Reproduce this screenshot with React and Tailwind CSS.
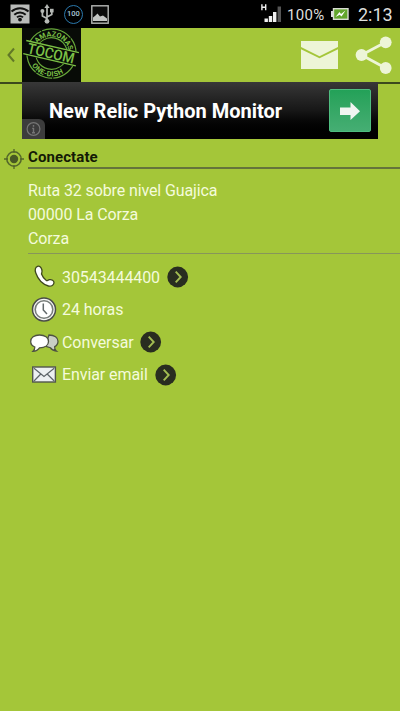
import React from "react";

function WifiBadge() {
  return (
    <svg width="20" height="20" viewBox="0 0 20 20" className="shrink-0">
      <rect x="0.5" y="0.5" width="19" height="19" fill="#b9bbb9" />
      <g fill="none" stroke="#111" strokeWidth="2">
        <path d="M1.5 7.6C6.4 3 13.6 3 18.5 7.6" />
        <path d="M4.3 10.7C7.5 7.7 12.5 7.7 15.7 10.7" />
        <path d="M7 13.4C8.7 11.7 11.3 11.7 13 13.4" />
      </g>
      <circle cx="10" cy="15.6" r="1.9" fill="#111" />
    </svg>
  );
}

function UsbIcon() {
  return (
    <svg width="14" height="20" viewBox="0 0 14 20" className="shrink-0" fill="#b5b8b5" stroke="#b5b8b5">
      <path d="M7 3V17M7 14.5L2.4 12V7M7 13L11.8 10.5V6" fill="none" strokeWidth="1.7" />
      <path d="M7 0L9.6 4H4.4Z" stroke="none" />
      <circle cx="2.4" cy="7" r="2" stroke="none" />
      <rect x="10" y="4.8" width="3.6" height="3.6" stroke="none" />
      <circle cx="7" cy="17.3" r="2.4" stroke="none" />
    </svg>
  );
}

function PictureIcon() {
  return (
    <svg width="18" height="19" viewBox="0 0 18 19" className="shrink-0">
      <rect x="0.8" y="0.8" width="16.4" height="17.4" fill="#0b0b0b" stroke="#b4b6b4" strokeWidth="1.4" />
      <path d="M2 16V12.5L4.5 10.5L6.5 8.5L9 11.5L12 10.5L16 13.5V16Z" fill="#c3c5c3" />
    </svg>
  );
}

function StatusBar() {
  return (
    <div className="flex h-7 items-center bg-black pl-[10px] pr-[7px] text-[#dededc]">
      <WifiBadge />
      <div className="ml-[10px] flex"><UsbIcon /></div>
      <div className="ml-[10px] flex size-[19px] shrink-0 items-center justify-center rounded-full border-[1.5px] border-[#2b79ad] text-[7.5px] font-medium text-[#a9c6d6]">
        100
      </div>
      <div className="ml-[8px] flex"><PictureIcon /></div>
      <svg width="22" height="20" viewBox="0 0 22 20" className="ml-auto shrink-0">
        <path d="M1.9 0.2V6.2M5.700 0.2V6.2M1.9 3.200H5.700" stroke="#eee" strokeWidth="1.4" fill="none" />
        <g fill="#f0f0f0">
          <rect x="4.500" y="14.500" width="3.400" height="3.500" />
          <rect x="8.800" y="12" width="3.400" height="6" />
          <rect x="13" y="8" width="3.400" height="10" />
        </g>
        <rect x="17.600" y="2.500" width="3.400" height="15.500" fill="#555" />
      </svg>
      <div className="ml-[5px] w-[38px] whitespace-nowrap pt-[2px] text-[15px] leading-5 tracking-[0.35px]">100%</div>
      <svg width="18" height="12" viewBox="0 0 18 12" className="ml-[6px] shrink-0">
        <rect x="0" y="3" width="3" height="6" fill="#ddd" />
        <rect x="2.5" y="0.7" width="14.5" height="10.6" fill="#62a52b" stroke="#d8dcd2" strokeWidth="1.4" />
        <path d="M4.500 9L8.500 4L10 6L14.500 2.500L10.500 8.500L8.700 6.800Z" fill="#fff" />
      </svg>
      <div className="ml-[9px] w-[35px] whitespace-nowrap pt-[2px] text-[18px] leading-5">2:13</div>
    </div>
  );
}

function Logo() {
  return (
    <svg width="59" height="54" viewBox="0 0 59 54" className="shrink-0 bg-[#080b07]">
      <defs>
        <path id="logoTop" d="M12 26A17.5 17.5 0 0 1 47 26" />
        <path id="logoBottom" d="M7 26A22.5 22.5 0 0 0 52 26" />
      </defs>
      <g transform="rotate(13 29.5 25.5)">
        <circle cx="29.5" cy="25.5" r="24.6" fill="none" stroke="#67a83a" strokeWidth="1.2" strokeDasharray="31 1 17 1" />
        <circle cx="29.5" cy="25.500" r="15.800" fill="none" stroke="#67a83a" strokeWidth="1.100" />
        <g fill="#7cc146" fontFamily="Roboto, sans-serif" fontWeight="700" fontSize="7.2" textAnchor="middle">
          <text>
            <textPath href="#logoTop" startOffset="50%">AMAZONAS</textPath>
          </text>
          <text letterSpacing="0.4">
            <textPath href="#logoBottom" startOffset="50%">ONE-DISH</textPath>
          </text>
        </g>
        <path d="M2 18H57V33H2Z" fill="#080b07" />
        <path d="M2 18.500H56M2 32H56" stroke="#7cc146" strokeWidth="1.300" />
        <text x="5" y="30.600" fontSize="14.800" textLength="48" lengthAdjust="spacingAndGlyphs" fontFamily="Roboto, sans-serif" fontWeight="500" fill="#7cc146">TOCOM</text>
      </g>
    </svg>
  );
}

function Header() {
  return (
    <header className="flex h-[54px] shrink-0 items-center">
      <svg width="22" height="54" viewBox="0 0 22 54" className="shrink-0">
        <path d="M14 20.5L8.500 27L14 33.5" fill="none" stroke="#617827" strokeWidth="2" />
      </svg>
      <Logo />
      <svg width="38" height="28" viewBox="0 0 38 28" className="ml-auto shrink-0">
        <path d="M1 0H38V6L19.500 15.300L1 6Z" fill="#edf5d7" />
        <path d="M1 8.300L19.500 17.200L38 8.300V28H1Z" fill="#edf5d7" />
      </svg>
      <svg width="37" height="38" viewBox="0 0 37 38" className="ml-[17px] mr-[8px] shrink-0">
        <path d="M30.500 6.300L6.500 19L30.500 32" fill="none" stroke="#edf5d7" strokeWidth="2.800" />
        <g fill="#edf5d7">
          <circle cx="30.700" cy="6.300" r="5.900" />
          <circle cx="6.500" cy="19" r="5.900" />
          <circle cx="30.700" cy="32" r="5.900" />
        </g>
      </svg>
    </header>
  );
}

function AdBanner() {
  return (
    <div className="flex h-[57px] shrink-0">
      <div className="h-[2px] w-[22px] bg-[#3b4a1d]" />
      <div className="relative flex w-[356px] items-center bg-gradient-to-b from-[#383838] via-[#171717] to-black pl-[27px] pr-[7px]">
        <div className="w-[240px] whitespace-nowrap text-[20px] font-bold leading-6 text-white">New Relic Python Monitor</div>
        <div className="ml-auto flex h-[43px] w-[42px] items-center justify-center rounded-[2px] border border-[#4fbd80] bg-gradient-to-b from-[#23a158] to-[#45ae73]">
          <svg width="20" height="18" viewBox="0 0 20 18">
            <path d="M0 5.500H10.500V0L20 9.200L10.500 18V13H0Z" fill="#f0f5f0" />
          </svg>
        </div>
        <div className="absolute bottom-0 left-0 flex h-5 w-[23px] items-center justify-center rounded-tr-[6px] bg-[#3c3c3c]">
          <svg width="15" height="15" viewBox="0 0 15 15" className="mr-px">
            <circle cx="7.5" cy="7" r="6.4" fill="none" stroke="#757575" strokeWidth="1.2" />
            <path d="M7.5 3V4.700M7.500 5.900V11M6 10.800H9M6.200 6.400H8" stroke="#757575" strokeWidth="1.400" />
          </svg>
        </div>
      </div>
      <div className="h-[2px] w-[22px] bg-[#3b4a1d]" />
    </div>
  );
}

function TargetIcon() {
  return (
    <svg width="20" height="22" viewBox="0 0 20 22" className="ml-[4px] shrink-0">
      <g fill="none" stroke="#53662a">
        <circle cx="10" cy="11" r="7.2" strokeWidth="1.5" />
        <path d="M10 1V5M10 17V21M0 11H4M16 11H20" strokeWidth="1.3" />
      </g>
      <circle cx="10" cy="11" r="4.2" fill="#485924" />
    </svg>
  );
}

function PhoneIcon() {
  return (
    <svg width="30" height="26" viewBox="0 0 30 26">
      <path d="M9.500 2.300C7.500 3 6.500 5.500 7.800 9C10 15.300 14.500 20.300 20.500 22C23.500 22.700 25.800 21 26 18.700C26 16.500 23.500 15.300 21.500 15.700C20 16 19.500 16.700 18.600 16.700C16.300 15.200 14.500 12.700 13.500 10C13.700 9 14.500 8 13.800 5.500C13 3 11.500 1.600 9.500 2.300Z" fill="#fff" stroke="#3d461d" strokeWidth="1.300" />
    </svg>
  );
}

function ClockIcon() {
  return (
    <svg width="30" height="26" viewBox="0 0 30 26">
      <circle cx="16" cy="12.500" r="11.500" fill="#f5f5f5" stroke="#4a4d48" strokeWidth="1.500" />
      <circle cx="16" cy="12.500" r="8.800" fill="#fff" stroke="#777d7a" strokeWidth="1.600" />
      <path d="M15.300 6.500V13L19 17" fill="none" stroke="#62696b" strokeWidth="1.500" />
    </svg>
  );
}

function ChatIcon() {
  return (
    <svg width="31" height="26" viewBox="0 0 31 26" className="-mr-px" stroke="#4d5142" strokeWidth="1.300">
      <path d="M21 6C26.500 6 30 8.500 30 12.300C30 14.800 28.600 16.700 26.700 17.700C26.500 19.500 27 21 28.300 22C25.500 21.700 23.500 20.700 22.300 18.700L17 17Z" fill="#c9cec5" />
      <path d="M11.500 6C17 6 20.500 8.700 20.500 12.500C20.500 16.300 17 18.800 11.500 18.800C10 21 7.800 22.200 5 22.300C6.300 21 6.900 19.500 6.800 18C4.200 17 2.700 15 2.700 12.500C2.700 8.700 6.200 6 11.500 6Z" fill="#fff" />
    </svg>
  );
}

function EmailIcon() {
  return (
    <svg width="30" height="26" viewBox="0 0 30 26">
      <rect x="4.700" y="5" width="22.700" height="15" fill="#edf0f2" stroke="#51554e" strokeWidth="1.400" />
      <path d="M6 6.200L16 14.500L26.200 6.200M6 19L12.800 12M26.200 19L19.200 12" fill="none" stroke="#5d6469" strokeWidth="1.200" />
    </svg>
  );
}

function ContactRow({ icon, label, labelClass, link }) {
  return (
    <div className="flex h-[32.5px] items-center">
      {icon}
      <span className={"ml-[4px] whitespace-nowrap pt-px text-base leading-5 tracking-[-0.08px] " + labelClass}>{label}</span>
      {link && (
        <svg width="22" height="22" viewBox="0 0 22 22" className="ml-[7px] shrink-0">
          <circle cx="10.700" cy="11" r="10.400" fill="#292d20" />
          <path d="M8.700 5.700L13.700 11L8.700 16.300" fill="none" stroke="#a3bd52" strokeWidth="1.900" />
        </svg>
      )}
    </div>
  );
}

export default function App() {
  return (
    <div className="flex h-[711px] w-[400px] flex-col overflow-hidden bg-[#a4c639] font-['Roboto',sans-serif]">
      <StatusBar />
      <Header />
      <AdBanner />
      <section className="flex h-[30px] shrink-0">
        <div className="pt-[9px]"><TargetIcon /></div>
        <div className="ml-[4px] grow border-b-2 border-[#65743b] pt-[8px] text-[15px] font-bold leading-5 tracking-[0.1px] text-[#141a06]">
          Conectate
        </div>
      </section>
      <section className="ml-7 h-[85px] shrink-0 border-b border-[#87965a] pt-[10px] text-base leading-[24px] tracking-[-0.12px] text-[#f4fbdc]">
        <p>Ruta 32 sobre nivel Guajica</p>
        <p>00000 La Corza</p>
        <p>Corza</p>
      </section>
      <section className="ml-7 flex flex-col pt-[7px] text-[#f4fbdc]">
        <ContactRow icon={<PhoneIcon />} label="30543444400" labelClass="w-[98px]" link />
        <ContactRow icon={<ClockIcon />} label="24 horas" labelClass="w-[62px]" />
        <ContactRow icon={<ChatIcon />} label="Conversar" labelClass="w-[71px]" link />
        <ContactRow icon={<EmailIcon />} label="Enviar email" labelClass="w-[86px]" link />
      </section>
    </div>
  );
}
